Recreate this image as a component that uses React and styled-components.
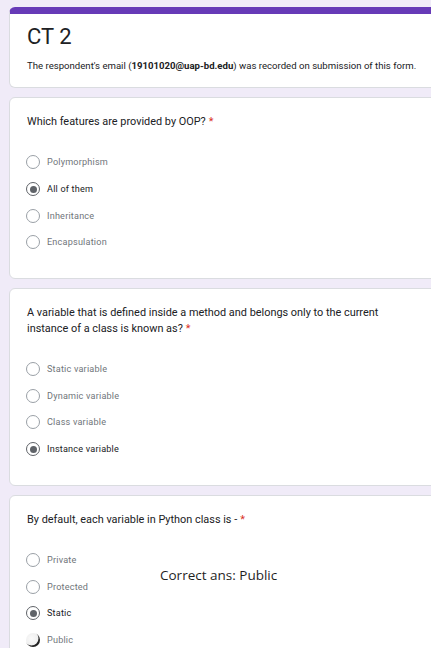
import React from "react";
import styled, { createGlobalStyle } from "styled-components";

const GlobalStyle = createGlobalStyle`
  html, body {
    margin: 0;
    padding: 0;
    background: #f0ebf8;
    overflow: hidden;
  }
  body {
    font-family: Roboto, "Noto Sans", Arial, sans-serif;
  }
`;

const Page = styled.div`
  position: relative;
  display: flex;
  flex-direction: column;
  gap: 9px;
  padding: 7px 0 0 9px;
  width: 460px;
`;

const Card = styled.div`
  background: #fff;
  border: 1px solid #dadce0;
  border-radius: 6px;
  box-sizing: border-box;
  padding: ${(p) => p.$pad || "16px 17px 22px"};
  display: flex;
  flex-direction: column;
`;

const HeaderCard = styled(Card)`
  border-top: 7px solid #673ab7;
  padding: 10px 17px 14px;
`;

const Title = styled.h1`
  margin: 0;
  font-size: 22px;
  font-weight: 400;
  color: #202124;
  line-height: 26px;
`;

const Note = styled.p`
  margin: 9px 0 0;
  font-size: 9.6px;
  color: #202124;
  line-height: 14px;

  b {
    font-weight: 700;
  }
`;

const Question = styled.div`
  font-size: 10.9px;
  line-height: 16px;
  color: #202124;
  max-width: 362px;
`;

const Star = styled.span`
  color: #d93025;
  margin-left: 3px;
`;

const Options = styled.div`
  display: flex;
  flex-direction: column;
  margin: 19px 0 0 -1px;
`;

const Option = styled.div`
  display: flex;
  align-items: center;
  gap: 7px;
  height: 26.7px;
`;

const Radio = styled.span`
  box-sizing: border-box;
  width: 14px;
  height: 14px;
  border-radius: 50%;
  border: 1.5px solid ${(p) => (p.$checked ? "#5f6368" : "#9aa0a6")};
  display: flex;
  align-items: center;
  justify-content: center;
  flex-shrink: 0;

  &::after {
    content: "";
    width: 7px;
    height: 7px;
    border-radius: 50%;
    background: #5f6368;
    display: ${(p) => (p.$checked ? "block" : "none")};
  }
`;

const FadingRadio = styled.span`
  box-sizing: border-box;
  width: 14px;
  height: 14px;
  border-radius: 50%;
  background: radial-gradient(circle at 40% 40%, #fafafa 0%, #ececec 70%);
  box-shadow: inset -1.5px -1.5px 0 #222;
  flex-shrink: 0;
`;

const Label = styled.span`
  font-size: 9.1px;
  letter-spacing: 0.2px;
  color: ${(p) => (p.$checked ? "#202124" : "#70757a")};
`;

const Annotation = styled.div`
  position: absolute;
  left: 160px;
  top: 566px;
  font-family: "Open Sans", "DejaVu Sans", sans-serif;
  font-size: 13.5px;
  color: #1f1f1f;
`;

const questions = [
  {
    text: "Which features are provided by OOP?",
    options: ["Polymorphism", "All of them", "Inheritance", "Encapsulation"],
    checked: 1,
  },
  {
    text: "A variable that is defined inside a method and belongs only to the current instance of a class is known as?",
    options: [
      "Static variable",
      "Dynamic variable",
      "Class variable",
      "Instance variable",
    ],
    checked: 3,
  },
  {
    text: "By default, each variable in Python class is -",
    options: ["Private", "Protected", "Static", "Public"],
    checked: 2,
    fading: 3,
  },
];

export default function App() {
  return (
    <>
      <GlobalStyle />
      <Page>
        <HeaderCard>
          <Title>CT 2</Title>
          <Note>
            The respondent's email (<b>19101020@uap-bd.edu</b>) was recorded
            on submission of this form.
          </Note>
        </HeaderCard>
        {questions.map((q, i) => (
          <Card key={i}>
            <Question>
              {q.text}
              <Star>*</Star>
            </Question>
            <Options>
              {q.options.map((o, j) => (
                <Option key={o}>
                  {q.fading === j ? (
                    <FadingRadio />
                  ) : (
                    <Radio $checked={q.checked === j} />
                  )}
                  <Label $checked={q.checked === j}>{o}</Label>
                </Option>
              ))}
            </Options>
          </Card>
        ))}
        <Annotation>Correct ans: Public</Annotation>
      </Page>
    </>
  );
}
